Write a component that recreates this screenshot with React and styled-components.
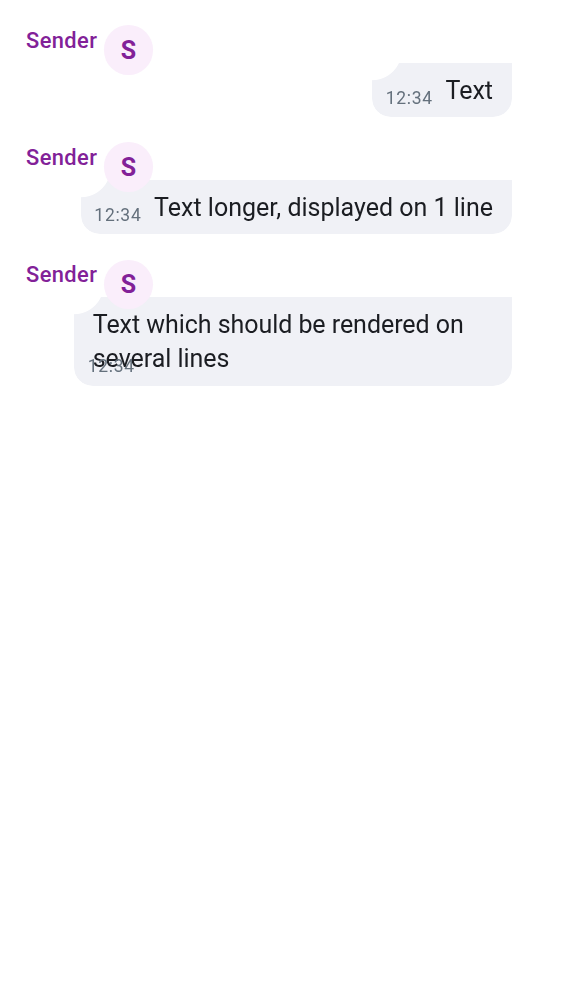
import React from "react";
import styled, { createGlobalStyle } from "styled-components";

const GlobalStyle = createGlobalStyle`
  body {
    margin: 0;
    background: #ffffff;
    font-family: Roboto, "Liberation Sans", sans-serif;
  }
`;

const Timeline = styled.main`
  box-sizing: border-box;
  min-height: 1000px;
  padding: 25.1px 50px 25px 26px;
  display: flex;
  flex-direction: column;
  gap: 25px;
`;

const Message = styled.article`
  display: flex;
  flex-direction: column;
`;

const SenderInfo = styled.header`
  display: flex;
  align-items: flex-start;
  gap: 6.25px;
  height: 50px;
  position: relative;
  z-index: 1;
`;

const SenderName = styled.span`
  color: #822198;
  font-size: 21.875px;
  font-weight: 500;
  line-height: 31.25px;
  letter-spacing: 0.42px;
  width: 71.25px;
  white-space: nowrap;
`;

const Avatar = styled.span`
  box-sizing: border-box;
  display: grid;
  place-items: center;
  width: 49.8px;
  height: 49.8px;
  margin-top: 0.1px;
  padding-top: 1.8px;
  border-radius: 50%;
  background: #faeefb;
  color: #822198;
  font-size: 25px;
  font-weight: 700;
  line-height: 48px;
`;

const Bubble = styled.div`
  position: relative;
  box-sizing: border-box;
  align-self: flex-end;
  margin-top: -12.5px;
  width: ${(p) => p.$width}px;
  padding: 11px 0 9.3px ${(p) => (p.$multiline ? 18.75 : 73.5)}px;
  border-radius: 0 0 18.75px 18.75px;
  background: #f0f1f6;
  mask-image: radial-gradient(
    circle at 0 -12.5px,
    transparent 29.3px,
    #000 30.1px
  );
`;

const Body = styled.p`
  margin: 0;
  color: #1b1d22;
  font-size: 25px;
  line-height: 34.375px;
  letter-spacing: ${(p) => p.$tracking || 0}px;
  white-space: pre-line;
`;

const Time = styled.time`
  position: absolute;
  left: 13.75px;
  bottom: 6.6px;
  color: #64707c;
  font-size: 17.5px;
  line-height: 25px;
  letter-spacing: 0.7px;
`;

const messages = [
  { text: "Text", width: 140 },
  {
    text: "Text longer, displayed on 1 line",
    width: 431.4,
  },
  {
    text: "Text which should be rendered on\nseveral lines",
    width: 438,
    multiline: true,
    tracking: -0.05,
  },
];

export default function App() {
  return (
    <>
      <GlobalStyle />
      <Timeline>
        {messages.map((m) => (
          <Message key={m.text}>
            <SenderInfo>
              <SenderName>Sender</SenderName>
              <Avatar>S</Avatar>
            </SenderInfo>
            <Bubble $width={m.width} $multiline={m.multiline}>
              <Body $tracking={m.tracking}>{m.text}</Body>
              <Time>12:34</Time>
            </Bubble>
          </Message>
        ))}
      </Timeline>
    </>
  );
}
